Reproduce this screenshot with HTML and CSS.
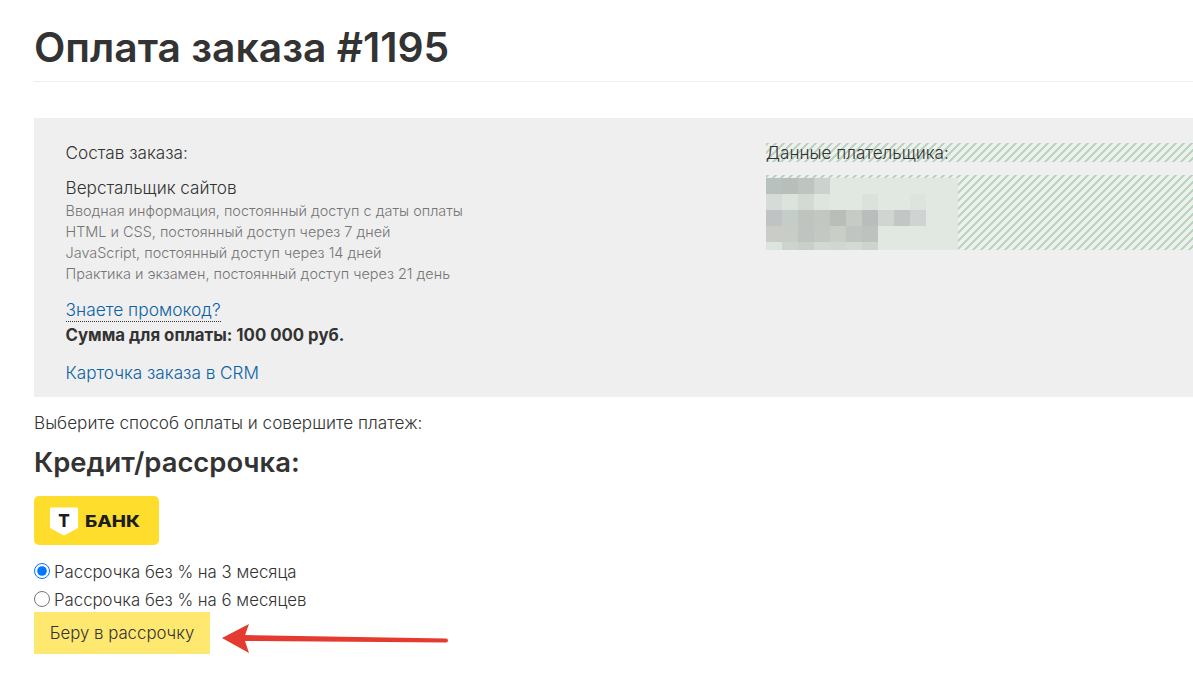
FILE: index.html
```html
<!DOCTYPE html>
<html lang="ru">
<head>
    <meta charset="UTF-8">
    <title>Оплата заказа #1195</title>
    <link rel="stylesheet" href="styles.css">
</head>
<body>
    <div class="page">
        <h1 class="title">Оплата заказа #1195</h1>
        <section class="panel">
            <div class="order">
                <p class="label">Состав заказа:</p>
                <p class="course">Верстальщик сайтов</p>
                <ul class="stages">
                    <li>Вводная информация, постоянный доступ с даты оплаты</li>
                    <li>HTML и CSS, постоянный доступ через 7 дней</li>
                    <li>JavaScript, постоянный доступ через 14 дней</li>
                    <li>Практика и экзамен, постоянный доступ через 21 день</li>
                </ul>
                <a class="promo" href="#">Знаете промокод?</a>
                <p class="sum">Сумма для оплаты: 100 000 руб.</p>
                <a class="crm" href="#">Карточка заказа в CRM</a>
            </div>
            <div class="payer">
                <p class="label payer-label">Данные плательщика:</p>
                <div class="payer-data">
                    <svg class="mosaic" width="192" height="72" viewBox="0 0 192 72" shape-rendering="crispEdges">
                        <rect width="192" height="72" fill="#e1e8e2"/>
                        <rect x="0" y="0" width="16" height="16" fill="#b9c1bf"/>
                        <rect x="16" y="0" width="16" height="16" fill="#b8bfbb"/>
                        <rect x="32" y="0" width="16" height="16" fill="#bec4c0"/>
                        <rect x="48" y="0" width="16" height="16" fill="#cbd2cf"/>
                        <rect x="0" y="16" width="16" height="16" fill="#d5dcd8"/>
                        <rect x="16" y="16" width="16" height="16" fill="#dbe3dc"/>
                        <rect x="32" y="16" width="16" height="16" fill="#d3dad4"/>
                        <rect x="48" y="16" width="16" height="16" fill="#dde5de"/>
                        <rect x="96" y="16" width="16" height="16" fill="#dbe2dc"/>
                        <rect x="144" y="16" width="16" height="16" fill="#dde4de"/>
                        <rect x="0" y="32" width="16" height="16" fill="#c0c3c4"/>
                        <rect x="16" y="32" width="16" height="16" fill="#c5cdc9"/>
                        <rect x="32" y="32" width="16" height="16" fill="#bfc4bf"/>
                        <rect x="48" y="32" width="16" height="16" fill="#c2c7c1"/>
                        <rect x="64" y="32" width="16" height="16" fill="#b9bfb8"/>
                        <rect x="80" y="32" width="16" height="16" fill="#c7cbc6"/>
                        <rect x="96" y="32" width="16" height="16" fill="#b9bdbb"/>
                        <rect x="112" y="32" width="16" height="16" fill="#d1d5d1"/>
                        <rect x="128" y="32" width="16" height="16" fill="#c2c6c4"/>
                        <rect x="144" y="32" width="16" height="16" fill="#cfd3d1"/>
                        <rect x="0" y="48" width="16" height="16" fill="#c9ccc7"/>
                        <rect x="16" y="48" width="16" height="16" fill="#c9cdc8"/>
                        <rect x="32" y="48" width="16" height="16" fill="#bfc4c0"/>
                        <rect x="48" y="48" width="16" height="16" fill="#c4c8c3"/>
                        <rect x="64" y="48" width="16" height="16" fill="#c9cec7"/>
                        <rect x="80" y="48" width="16" height="16" fill="#c1c5c1"/>
                        <rect x="96" y="48" width="16" height="16" fill="#bdc2be"/>
                        <rect x="0" y="64" width="16" height="8" fill="#dbe5dd"/>
                        <rect x="16" y="64" width="16" height="8" fill="#cdd4ce"/>
                        <rect x="32" y="64" width="16" height="8" fill="#c9d0ca"/>
                        <rect x="48" y="64" width="16" height="8" fill="#d2d8d2"/>
                        <rect x="64" y="64" width="16" height="8" fill="#d0d7d0"/>
                        <rect x="80" y="64" width="16" height="8" fill="#d3d9d3"/>
                        <rect x="96" y="64" width="16" height="8" fill="#cdd3cd"/>
                    </svg>
                </div>
            </div>
        </section>
        <p class="hint">Выберите способ оплаты и совершите платеж:</p>
        <h2 class="subtitle">Кредит/рассрочка:</h2>
        <svg class="bank-logo" width="125" height="49" viewBox="0 0 125 49">
            <rect width="125" height="49" rx="5" fill="#ffdd2d"/>
            <path d="M16 11.500h28v20.500L30 39.500 16 32z" fill="#fff"/>
            <text class="logo-t" x="30" y="31" text-anchor="middle">Т</text>
            <text class="logo-word" x="51" y="31" textLength="55" lengthAdjust="spacingAndGlyphs">БАНК</text>
        </svg>
        <form class="credit">
            <label class="option"><input type="radio" name="term" checked>Рассрочка без % на 3 месяца</label>
            <label class="option"><input type="radio" name="term">Рассрочка без % на 6 месяцев</label>
            <button class="btn-credit" type="button">Беру в рассрочку</button>
        </form>
    </div>
    <svg class="arrow" width="240" height="40" viewBox="0 0 240 40">
        <path d="M24 12L226 15.500a2 2 0 0 1 0 4L24 18z" fill="#e53a2f"/>
        <path d="M2 15L29 1l-5 14 5 15z" fill="#e53a2f"/>
    </svg>
</body>
</html>
```

FILE: styles.css
```css
*{
    margin: 0;
    padding: 0;
    box-sizing: border-box;
}
html,body{
    height: 100%;
    overflow: hidden;
}
body{
    background: #fff;
    color: #333;
    font-family: Inter, "Noto Sans", sans-serif;
    font-size: 17.150px;
    font-weight: 300;
    position: relative;
}
.page{
    padding: 20px 0 0 34px;
}
.title{
    font-size: 40.800px;
    line-height: 54px;
    font-weight: 600;
    color: #333;
    padding-bottom: 7px;
    border-bottom: 1px solid #eee;
}
.panel{
    margin-top: 36px;
    height: 279px;
    background: #efefef;
    padding: 24px 0 0 31.500px;
    display: flex;
}
.order{
    width: 700.500px;
}
.label{
    line-height: 22px;
}
.course{
    margin-top: 13px;
    line-height: 22px;
}
.stages{
    margin-top: 1px;
    list-style: none;
    font-size: 14.450px;
    line-height: 21px;
    color: #757575;
}
.promo{
    display: inline-block;
    margin-top: 15px;
    color: #0b62a4;
    text-decoration: none;
    font-size: 17.350px;
    line-height: 22px;
    border-bottom: 1px dotted #333;
}
.sum{
    margin-top: 2px;
    font-size: 16.800px;
    font-weight: 700;
    line-height: 22px;
}
.crm{
    display: block;
    margin-top: 16px;
    color: #0b62a4;
    text-decoration: none;
    line-height: 22px;
}
.payer{
    flex: 1;
}
.payer-label,.payer-data{
    background-image: linear-gradient(135deg, #bad6bf 20%, #efefef 20% 50%, #bad6bf 50% 70%, #efefef 70%);
    background-size: 8px 8px;
}
.payer-label{
    height: 19px;
    line-height: 19px;
    margin-top: 1px;
}
.payer-data{
    height: 75px;
    margin-top: 13px;
    padding-top: 3px;
}
.mosaic{
    display: block;
}
.hint{
    margin-top: 15px;
    line-height: 22px;
}
.subtitle{
    margin-top: 11px;
    font-size: 27.400px;
    line-height: 34px;
    font-weight: 600;
}
.bank-logo{
    display: block;
    margin-top: 17px;
}
.logo-t{
    font: 800 17px Inter, sans-serif;
    fill: #1d1d24;
}
.logo-word{
    font: 800 15.500px Inter, sans-serif;
    fill: #1d1d24;
}
.credit{
    margin-top: 13px;
}
.option{
    display: block;
    font-size: 16.800px;
    line-height: 28px;
}
.option input{
    width: 16px;
    height: 16px;
    margin-right: 4px;
    vertical-align: -1px;
}
.btn-credit{
    display: block;
    width: 176px;
    height: 42px;
    margin-top: -2px;
    border: 0;
    background: #ffe86f;
    color: #333;
    font-family: inherit;
    font-size: 16.800px;
    font-weight: 300;
}
.arrow{
    position: absolute;
    left: 220px;
    top: 623px;
}
```
